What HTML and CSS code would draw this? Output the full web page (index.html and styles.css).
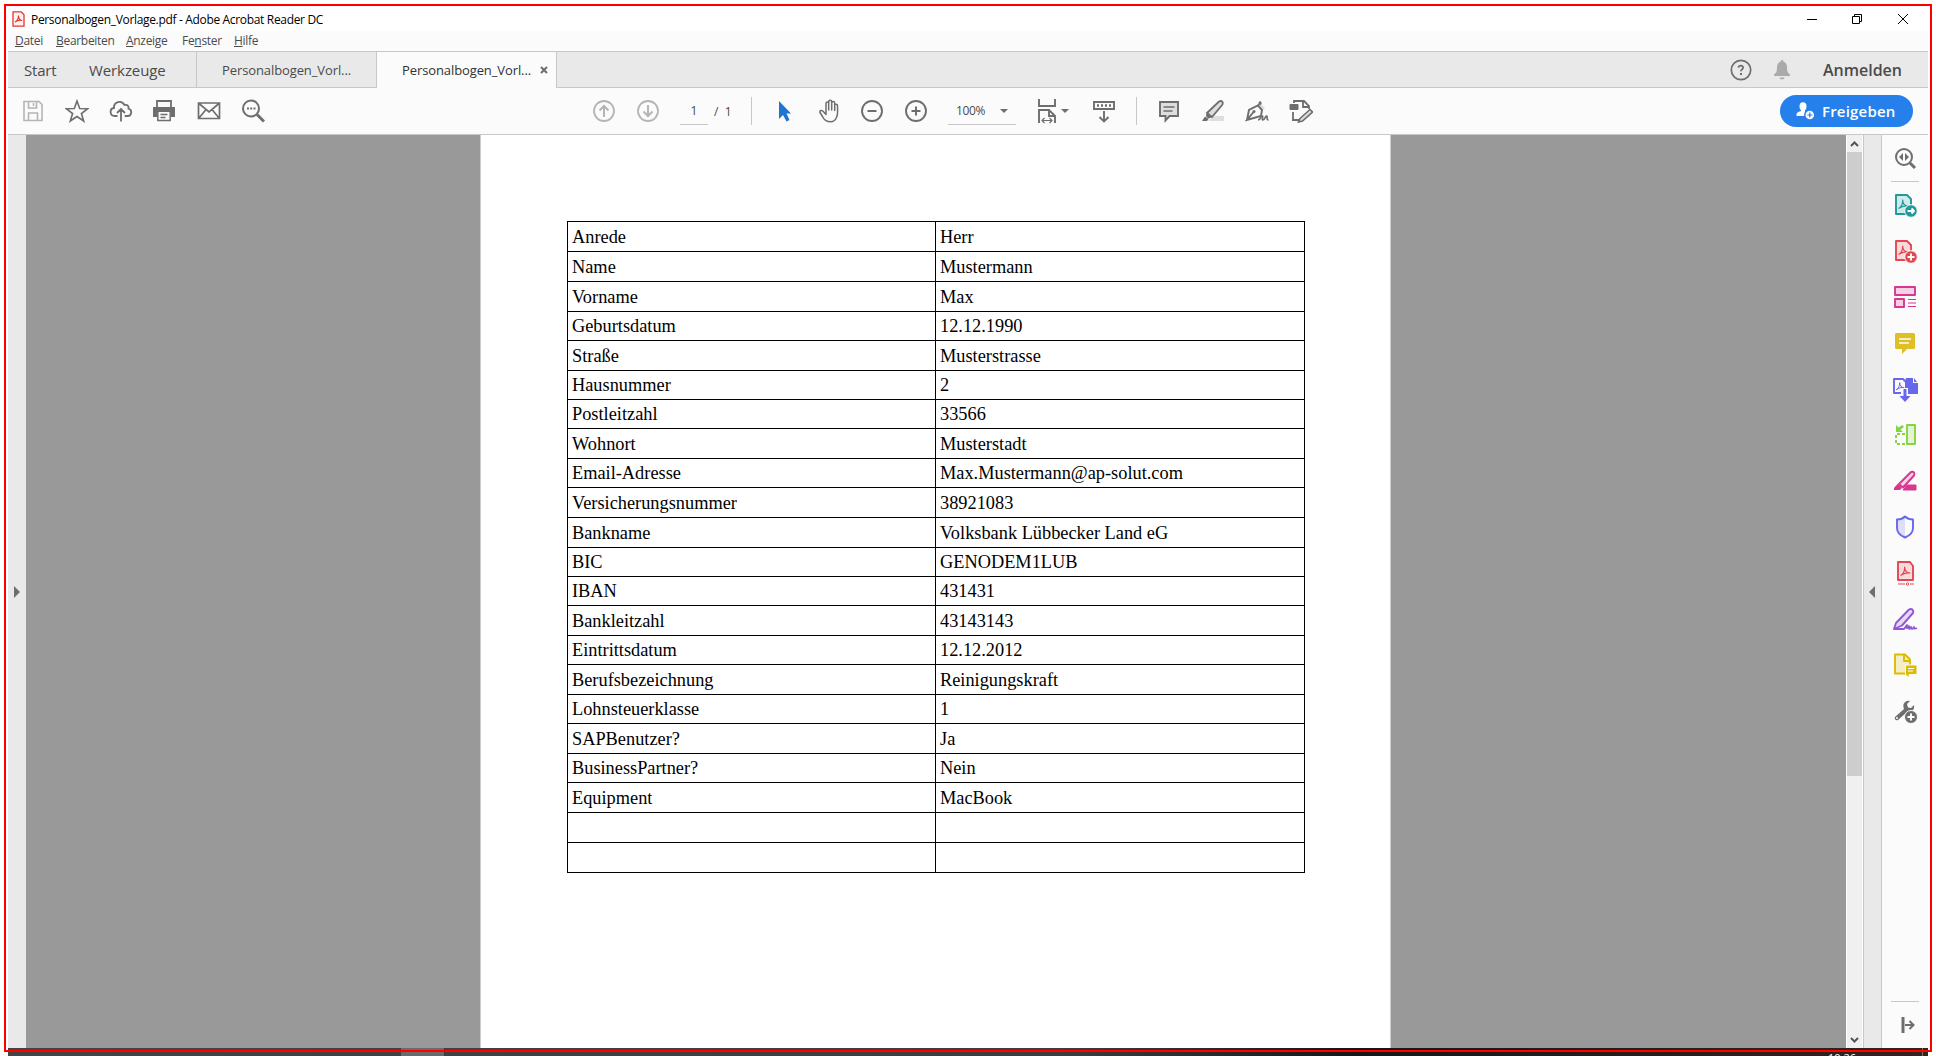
FILE: index.html
```
<!DOCTYPE html>
<html lang="de">
<head>
<meta charset="utf-8">
<title>Personalbogen_Vorlage.pdf - Adobe Acrobat Reader DC</title>
<link rel="stylesheet" href="styles.css">
</head>
<body>
<svg width="0" height="0" class="defs">
  <symbol id="pdf-mark" viewBox="0 0 12 12"><path d="M1.500 10.500c2-.8 4.200-4 4.200-8.500 0 3.500 2 5.800 5.300 6-3.300-.5-6.500.2-9.500 2.500" fill="none" stroke="currentColor" stroke-width="1.200" stroke-linejoin="round"/></symbol>
</svg>
<div class="window">
  <header class="titlebar">
    <svg class="app-icon" width="13" height="16" viewBox="0 0 13 16"><path d="M1 .8h8l3 3v11.400H1z" fill="#fff4f3" stroke="#e5352c" stroke-width="1.300" stroke-linejoin="round"/><path d="M3 11c2-.8 3.500-4 3.500-6.500C6.500 7.500 8 9.500 10.300 9.500 8 9 5 9.500 3 11z" fill="none" stroke="#e5352c" stroke-width="1.200"/></svg>
    <span class="title">Personalbogen_Vorlage.pdf - Adobe Acrobat Reader DC</span>
    <svg class="controls" width="102" height="12" viewBox="0 0 102 12" fill="none" stroke="#000"><path d="M0 6.500h10M45.500 3.500h7v7h-7zM47.500 3.500v-2h7v7h-2M91 1l10 10M101 1L91 11"/></svg>
  </header>
  <nav class="menubar"><span class="m1"><u>D</u>atei</span><span class="m2"><u>B</u>earbeiten</span><span class="m3"><u>A</u>nzeige</span><span class="m4">Fe<u>n</u>ster</span><span class="m5"><u>H</u>ilfe</span></nav>
  <div class="tabs">
    <div class="home"><span class="start">Start</span><span class="tools-tab">Werkzeuge</span></div>
    <div class="tab"><span>Personalbogen_Vorl...</span></div>
    <div class="tab active"><span>Personalbogen_Vorl...</span><svg width="8" height="8" viewBox="0 0 8 8"><path d="M1 1l6 6M7 1L1 7" stroke="#6e6e6e" stroke-width="2"/></svg></div>
    <div class="account">
      <svg width="22" height="22" viewBox="0 0 22 22"><circle cx="11" cy="11" r="9.700" fill="none" stroke="#6e6e6e" stroke-width="1.700"/><path d="M8.500 8.600C8.700 6 13.300 6.100 13.100 8.700c-.1 1.600-2.200 1.700-2.200 3.500" fill="none" stroke="#6e6e6e" stroke-width="1.800"/><path d="M10 14h2v2h-2z" fill="#6e6e6e"/></svg>
      <svg class="bell" width="18" height="20" viewBox="0 0 18 20" fill="#aaa"><path d="M9 0c1 0 1.500.8 1.500 1.800C13 2.500 14 4.500 14 7c0 4 .5 6 3 7.500V16H1v-1.500C3.500 13 4 11 4 7c0-2.500 1-4.500 3.500-5.200C7.500.8 8 0 9 0zM6.500 17.500h5C11 20 7 20 6.500 17.500z"/></svg>
      <b>Anmelden</b>
    </div>
  </div>
  <div class="toolbar">
    <div class="group files">
      <svg viewBox="0 0 24 24" class="pale"><path d="M3 2.500h15l3 3v16H3zM7.500 3v6h8V3M7.500 21v-7h9v7" stroke-width="1.600"/><path d="M12.500 4v3"/></svg>
      <svg viewBox="0 0 24 24"><path d="M12 2l2.700 7.500 8 .2-6.300 4.800 2.300 7.500L12 17.500 5.300 22l2.300-7.500-6.300-4.800 8-.2z" stroke-width="1.600"/></svg>
      <svg viewBox="0 0 24 24"><path d="M8.500 17H6C.3 17 .3 9.500 5 9 4.500 3 12.500.5 15.500 6c3-.8 4.500 1.500 4 3.600 4 1 3.500 7.400-.8 7.400h-3M12 22.500V10.500M8 14l4-4 4 4" stroke-width="1.800"/></svg>
      <svg viewBox="1 0 24 24"><path d="M5 8V2h14v6" stroke-width="1.800"/><path d="M1 8h22v10h-4v-5H5v5H1z" class="solid"/><path d="M5.800 13v8.500h12.400V13M8.500 15.500h7M8.500 18.500h5"/></svg>
      <svg viewBox="0 0 24 24"><path d="M1.500 4h21v15.500h-21zM2 4.500l10 8.500L22 4.500M2 19l7-8.500M22 19l-7-8.500" stroke-width="1.700"/></svg>
      <svg viewBox="0 0 24 24"><circle cx="10" cy="9.500" r="8" stroke-width="2"/><path d="M16 15.500l7 7" stroke-width="3"/><path d="M6 8.500h2v2H6zM9.200 8.500h2v2h-2zM12.500 8.500h2v2h-2z" class="dot"/></svg>
    </div>
    <div class="group pages">
      <svg viewBox="0 0 24 24" class="pale"><circle cx="12" cy="12" r="10" stroke-width="1.800"/><path d="M12 18V7M7.500 11.500L12 7l4.500 4.500" stroke-width="2"/></svg>
      <svg viewBox="0 0 24 24" class="pale"><circle cx="12" cy="12" r="10" stroke-width="1.800"/><path d="M12 6v11M7.500 12.500L12 17l4.500-4.500" stroke-width="2"/></svg>
    </div>
    <span class="page-field">1</span><span class="page-total">/&nbsp; 1</span>
    <i class="divider d1"></i>
    <div class="group view">
      <svg viewBox="0 0 24 24"><path d="M6 2v18l4-4 3.500 6.500 3-1.500-3-6.500H18z" fill="#1f74d1" stroke="none"/></svg>
      <svg viewBox="0 0 24 24"><path d="M7 13V4.500c0-2 2.700-2 2.700 0V11 2.700c0-2 3-2 3 0V11 4c0-2 3-2 3 0v7.500V6.500c0-1.800 2.800-1.800 2.800.2 0 7 .8 8.300-1 11.800-1.500 3.500-3.500 4.300-6 4.300-4 0-6-1.500-7.700-4.800L1 13.500c-.8-2 1.500-2.800 3-1.300l3 3.300z" stroke-width="1.500" stroke-linejoin="round" transform="translate(2 0)"/></svg>
      <svg viewBox="0 0 24 24"><circle cx="12" cy="12" r="10" stroke-width="1.900"/><path d="M7.500 12h9" stroke-width="2"/></svg>
      <svg viewBox="0 0 24 24"><circle cx="12" cy="12" r="10" stroke-width="1.900"/><path d="M7.500 12h9M12 7.500v9" stroke-width="2"/></svg>
    </div>
    <div class="zoom"><span>100%</span><i class="caret"></i></div>
    <svg class="fit" viewBox="0 0 18 26"><path d="M1 1v7h16V1M1 25V12h10l6 6v7M11 12v6h6" stroke-width="1.900"/><path d="M4 22.500h10M6.500 20L4 22.500 6.500 25M11.500 20l2.500 2.500-2.500 2.500" stroke-width="1.200"/></svg>
    <i class="caret fit-caret"></i>
    <svg class="scroll" viewBox="0 0 24 24"><path d="M2 3h20v7H2zM12 12v10M7.500 18l4.500 4.500 4.500-4.500" stroke-width="1.900"/><path d="M5 6.500h14" stroke-width="2.500" stroke-dasharray="2 2"/></svg>
    <i class="divider d2"></i>
    <div class="group annotate">
      <svg viewBox="0 0 24 24"><path d="M3 3h18v14h-8.500L8.500 21.500V17H3z" fill="#dedede" stroke-width="1.900"/><path d="M6.500 8h11M6.500 12h9" stroke-width="1.300"/></svg>
      <svg viewBox="0 0 24 24"><path d="M7 22l6-5h10v5z" fill="#dedede" stroke="none"/><path d="M6 14L18 2.500c3-1.500 4.500 1 3.500 3L11 18z" fill="#dedede" stroke-width="1.800"/><path d="M5.500 14l5.500 4.500-4 1L5 17zM4 17.500l3.500 2.500L6 22H1z" class="solid"/></svg>
      <svg viewBox="0 0 24 24"><path d="M12 3l3 1 5 5-3 3z" fill="#dedede" stroke="none"/><path d="M14.500 2.500l1.500 3M2 21L4 11l9-4.500 4 4.500-1 6L2 21l6.500-8" stroke-width="1.900"/><circle cx="9" cy="12.500" r="1.500" class="solid"/><path d="M13 21c3 0 2-4 4-4s-1 4 1 4 2-4 3.500-4-.5 4 2 4M12.500 7L16 3" stroke-width="1.700"/></svg>
      <svg viewBox="0 0 24 24"><path d="M5 4V2h10l5 5v3M14 2v6h6M4 13v8h6" stroke-width="1.800"/><rect x=".5" y="5" width="9" height="6" rx="1" class="solid"/><path d="M11 19.500L21 10.500l2.500 2.500-10 9-4 1z" fill="#dedede" stroke-width="1.600"/></svg>
    </div>
    <button class="share"><svg viewBox="0 0 19 18"><g fill="#fff"><ellipse cx="7" cy="4.500" rx="3.500" ry="4.200"/><path d="M5 7h4v3c1.500.5 2.500 1 2.500 1L9 14H.5C.3 11 1.500 10 5 9z"/><circle cx="13.800" cy="13" r="5" stroke="#2680eb"/></g><path d="M13.800 10.500v5M11.300 13h5" stroke="#2680eb" stroke-width="1.200"/></svg>Freigeben</button>
  </div>
  <main>
    <div class="left-rail"><i></i></div>
    <div class="canvas">
      <section class="sheet"><table>
        <colgroup><col class="label-col"><col></colgroup>
        <tr class="tall"><td>Anrede<td>Herr
        <tr class="tall"><td>Name<td>Mustermann
        <tr class="tall"><td>Vorname<td>Max
        <tr><td>Geburtsdatum<td>12.12.1990
        <tr class="tall"><td>Straße<td>Musterstrasse
        <tr><td>Hausnummer<td>2
        <tr><td>Postleitzahl<td>33566
        <tr class="tall"><td>Wohnort<td>Musterstadt
        <tr><td>Email-Adresse<td>Max.Mustermann@ap-solut.com
        <tr class="tall"><td>Versicherungsnummer<td>38921083
        <tr class="tall"><td>Bankname<td>Volksbank Lübbecker Land eG
        <tr><td>BIC<td>GENODEM1LUB
        <tr><td>IBAN<td>431431
        <tr class="tall"><td>Bankleitzahl<td>43143143
        <tr><td>Eintrittsdatum<td>12.12.2012
        <tr class="tall"><td>Berufsbezeichnung<td>Reinigungskraft
        <tr><td>Lohnsteuerklasse<td>1
        <tr class="tall"><td>SAPBenutzer?<td>Ja
        <tr><td>BusinessPartner?<td>Nein
        <tr class="tall"><td>Equipment<td>MacBook
        <tr class="tall"><td><td>
        <tr class="tall"><td><td>
      </table></section>
    </div>
    <div class="scrollbar"><svg viewBox="0 0 15 17"><path d="M4 11l3.500-3.500L11 11" /></svg><i></i><svg viewBox="0 0 15 17"><path d="M4 7l3.500 3.500L11 7"/></svg></div>
    <div class="right-rail"><i></i></div>
    <aside>
      <svg class="find" viewBox="0 0 24 24" stroke="#6e6e6e"><circle cx="11" cy="11" r="8" stroke-width="2"/><path d="M17 17l5 5" stroke-width="3"/><path d="M10 7v8l-4-4zM12 7v8l4-4z" fill="#6e6e6e" stroke="none"/></svg>
      <i class="rule"></i>
      <div class="tool-list">
      <svg viewBox="0 0 24 24" color="#23979c"><path d="M3 2h11l4 4v15H3z" fill="#d0e9ea"/><use href="#pdf-mark" x="4" y="5" width="12" height="12"/><circle cx="18" cy="18" r="6.300" fill="currentColor" stroke="#fbfbfb" stroke-width="1"/><path d="M14.500 18h6M18.500 15.500L21 18l-2.500 2.500" stroke="#fff"/></svg>
      <svg viewBox="0 0 24 24" color="#e34850"><path d="M3 2h11l4 4v15H3z" fill="#f9dadc"/><use href="#pdf-mark" x="4" y="5" width="12" height="12"/><circle cx="18" cy="18" r="6.300" fill="currentColor" stroke="#fbfbfb" stroke-width="1"/><path d="M14.500 18h7M18 14.500v7" stroke="#fff"/></svg>
      <svg viewBox="0 0 24 24" color="#d83790"><path d="M2 2h20v8H2zM2 14h9v8H2z" fill="#f4d1e4"/><path d="M15 14.500h8M15 18h8M15 21.500h8" stroke-width="1.200"/></svg>
      <svg viewBox="0 0 24 24" color="#dfbf23"><path d="M3.500 2h17Q22 2 22 3.500v13q0 1.500-1.500 1.500H14l-5 5v-5H3.500Q2 18 2 16.500v-13Q2 2 3.500 2z" fill="currentColor" stroke="none"/><path d="M6 8h12M6 12h10" stroke="#fff" stroke-width="1.600"/></svg>
      <svg viewBox="0 0 24 24" color="#6767ec"><path d="M8 16H1V2h9l3 3M10 16h2"/><path d="M13 1h7v5h5v11H15v-6h-3V4z" fill="currentColor" stroke="none"/><path d="M21 1l3 4h-3z" fill="currentColor" stroke="none"/><use href="#pdf-mark" x="2" y="4" width="10" height="10"/><path d="M12 11v9" stroke="#fbfbfb" stroke-width="5"/><path d="M12 12v8" stroke-width="3"/><path d="M6.500 19h11L12 25z" fill="currentColor" stroke="none"/></svg>
      <svg viewBox="0 0 24 24" color="#86d43f"><path d="M14 2h8v19h-8z" fill="#e3f4d4"/><path d="M12 11H3v10h9" stroke-dasharray="3 2"/><path d="M3 2v7h7L7.500 6.500 11 4 9.500 2 5.500 4.500z" fill="currentColor" stroke="none"/></svg>
      <svg viewBox="0 0 24 24" color="#d83790"><path d="M10 21l4-5h9v5z" fill="currentColor" stroke-width="1"/><path d="M6 15L18 3c3-1 4 1 3 3.500L10 18.500z" fill="#f4d1e4"/><path d="M5 14.500L9 19l-2 2H1v-2z" fill="currentColor" stroke="none"/></svg>
      <svg viewBox="0 0 24 24" color="#6767ec"><path d="M12 1.500C10 3.500 7 4.500 4 4.500V13c0 4.500 3 7.500 8 9.500z" fill="#dedef9" stroke="none"/><path d="M12 1.500C10 3.500 7 4.500 4 4.500V13c0 4.500 3 7.500 8 9.500 5-2 8-5 8-9.500V4.500c-3 0-6-1-8-3z"/></svg>
      <svg viewBox="0 0 24 24" color="#e34850"><path d="M5 1h12l3 4v14H5z" fill="#f9dadc"/><use href="#pdf-mark" x="6" y="4" width="12" height="12"/><path d="M5 23h7M17 23h4" stroke-width="1.200"/><circle cx="14.500" cy="23" r="1.200" stroke-width="1"/></svg>
      <svg viewBox="0 0 24 24" color="#9256d9"><path d="M1 22l2-6L16 2.500c3-1.500 5 1 4 3.500L9 18.500z" fill="#e5d9f5"/><path d="M1 22h10l3-4c-1 4 0 4 2 1-.5 3 0 4 2 1 0 3 2 2 3 0 0 2 1 2 3 1"/></svg>
      <svg viewBox="0 0 24 24" color="#dcbc00"><path d="M2 1.500h10l5 5v14H2z" fill="#f4edc6"/><path d="M11 2v6h6"/><path d="M12.500 12H24v9.500h-8V25l-3.500-3.500z" fill="currentColor" stroke="#fbfbfb" stroke-width="1"/><path d="M15 15.500h6M15 18h5" stroke="#fff" stroke-width="1.200"/></svg>
      <svg viewBox="0 0 24 24" color="#6e6e6e"><path d="M2 18L11 10C9 5 12 1 17 2l-3 3 1 3.500 3 .5 3-3c1 5-3 8-7 7L5 21c-2 1-4-1-3-3z" fill="currentColor" stroke="none"/><circle cx="4" cy="19" r="1" fill="#fff" stroke="none"/><circle cx="18" cy="18" r="6.500" fill="currentColor" stroke="#fbfbfb" stroke-width="1"/><path d="M14.500 18h7M18 14.500v7" stroke="#fff"/></svg>
      </div>
      <div class="collapse"><i class="rule"></i><svg viewBox="0 0 16 18" stroke="#6e6e6e"><path d="M3 1v16" stroke-width="3"/><path d="M5 9h8M9.500 5l4 4-4 4" stroke-width="2"/></svg></div>
    </aside>
  </main>
  <footer><i class="task"></i><span>10:26</span><i class="peek"></i></footer>
</div>
<div class="outline"></div>
</body>
</html>
```
FILE: styles.css
```
* { box-sizing: border-box; }
body { margin: 0; width: 1936px; height: 1056px; overflow: hidden; background: #fff; font-family: "Open Sans", "Noto Sans", sans-serif; color: #4b4b4b; }
svg { display: block; flex: none; }
.defs { position: absolute; }
.outline { position: absolute; left: 4px; top: 4px; width: 1928px; height: 1048px; border: 2px solid #f00; }
.window { display: flex; flex-direction: column; width: 1920px; height: 1056px; margin-left: 8px; }

.titlebar { display: flex; align-items: center; height: 31px; padding: 7px 19px 0 4px; flex: none; }
.app-icon { margin-right: 6px; }
.title { font-size: 12px; letter-spacing: -.33px; color: #000; white-space: nowrap; }
.controls { margin-left: auto; }

.menubar { display: flex; align-items: center; height: 20px; flex: none; padding: 0 0 2px 7px; background: #fbfbfb; font-size: 12px; letter-spacing: -.3px; }
.menubar span { white-space: nowrap; }
.m1 { width: 41px; }
.m2 { width: 70px; }
.m3 { width: 56px; }
.m4 { width: 52px; }

.tabs { display: flex; height: 37px; flex: none; border-top: 1px solid #c8c8c8; background: linear-gradient(#e9e9e9 35px, #c8c8c8 35px); }
.home { display: flex; align-items: center; width: 188px; padding: 0 0 1px 16px; font-size: 15px; }
.start { width: 65px; letter-spacing: -.2px; }
.tools-tab { letter-spacing: -.1px; }
.tab { display: flex; align-items: center; width: 180px; padding: 0 0 1px 25px; border-left: 1px solid #c8c8c8; font-size: 13px; letter-spacing: -.1px; white-space: nowrap; }
.tab.active { width: 181px; border-right: 1px solid #c8c8c8; background: #fbfbfb; color: #323232; }
.tab svg { margin-left: 9px; }
.account { display: flex; align-items: center; margin-left: auto; padding: 0 26px 1px 0; font-size: 16px; }
.account .bell { margin: 0 32px 0 21px; }
.account b { font-weight: 600; }

.toolbar { display: flex; align-items: center; height: 47px; flex: none; border-bottom: 1px solid #c8c8c8; background: #fbfbfb; }
.toolbar svg { width: 24px; height: 24px; fill: none; stroke: #6e6e6e; stroke-width: 1.500; }
.toolbar .solid { fill: #6e6e6e; stroke: none; }
.toolbar .dot { fill: #6e6e6e; stroke: none; }
.toolbar svg.pale { stroke: #b5b5b5; }
.group { display: flex; gap: 20px; flex: none; }
.files { margin-left: 13px; }
.pages { margin-left: 327px; }
.page-field { width: 28px; height: 27px; margin-left: 20px; padding-top: 4px; border-bottom: 1px solid #c8c8c8; text-align: center; font-size: 12px; }
.page-total { width: 24px; margin-left: 6px; font-size: 12px; white-space: nowrap; }
.divider { width: 1px; height: 28px; background: #c8c8c8; flex: none; }
.d1 { margin-left: 13px; }
.view { margin-left: 21px; }
.view svg:nth-child(n+3) { margin-left: -1px; margin-right: 1px; }
.zoom { display: flex; align-items: center; width: 68px; height: 27px; margin-left: 19px; padding: 0 8px; border-bottom: 1px solid #c8c8c8; font-size: 12px; letter-spacing: -.4px; justify-content: space-between; }
.caret { border: 4px solid transparent; border-top-color: #6e6e6e; border-bottom: 0; flex: none; }
.toolbar .fit { width: 18px; height: 26px; margin-left: 22px; }
.fit-caret { margin-left: 5px; }
.toolbar .scroll { margin-left: 23px; }
.d2 { margin-left: 20px; }
.annotate { margin-left: 20px; }
.share { display: flex; align-items: center; width: 133px; height: 32px; margin-left: auto; margin-right: 15px; padding: 0 0 1px 16px; border: 0; border-radius: 16px; background: #2680eb; color: #fff; font: 600 15px "Open Sans", sans-serif; letter-spacing: .2px; }
.toolbar .share svg { width: 19px; height: 18px; margin-right: 7px; stroke: none; }

main { display: flex; height: 913px; flex: none; }
.left-rail { display: flex; align-items: center; width: 18px; padding-left: 6px; background: #e9e9e9; }
.left-rail i { border: 6px solid transparent; border-left-color: #6e6e6e; border-right: 0; }
.canvas { flex: 1; background: #999; }
.sheet { width: 911px; height: 913px; margin-left: 454px; padding: 86px 0 0 86px; background: #fff; border: solid #ccc; border-width: 0 1px; }
table { width: 738px; border-collapse: collapse; table-layout: fixed; font: 18.330px/20px "Liberation Serif", serif; color: #000; }
.label-col { width: 368px; }
tr { height: 29px; }
tr.tall { height: 30px; }
td { height: inherit; padding: 0 4px; border: 1px solid #000; white-space: nowrap; }
.scrollbar { display: flex; flex-direction: column; width: 17px; background: #f0f0f0; border: solid #fff; border-width: 0 1px; }
.scrollbar svg { width: 15px; height: 17px; fill: none; stroke: #555; stroke-width: 2; }
.scrollbar i { height: 624px; background: #cdcdcd; margin-bottom: auto; }
.right-rail { display: flex; align-items: center; width: 19px; padding-left: 5px; background: #e9e9e9; border: solid #c8c8c8; border-width: 0 1px; }
.right-rail i { border: 6px solid transparent; border-right-color: #6e6e6e; border-left: 0; }
aside { display: flex; flex-direction: column; align-items: center; width: 46px; background: #fbfbfb; padding-top: 11px; }
aside svg { width: 24px; height: 24px; fill: none; overflow: visible; }
aside .rule { display: block; width: 28px; height: 1px; background: #c8c8c8; }
.find { margin-bottom: 11px; }
.tool-list { display: flex; flex-direction: column; gap: 22px; margin-top: 11px; }
.tool-list svg { stroke: currentColor; stroke-width: 1.900; stroke-linejoin: round; }
.collapse { display: flex; flex-direction: column; align-items: center; margin-top: auto; padding-bottom: 14px; }
.collapse svg { width: 16px; height: 18px; margin: 14px 0 0 5px; }

footer { display: flex; height: 8px; flex: none; overflow: hidden; background: linear-gradient(90deg, #444 0, #3d3d3d 55%, #171717 70%, #281d1b 85%, #34231f); }
.task { width: 44px; margin-left: 393px; background: #6b6b6b; border-right: 1px solid #383838; }
footer span { margin-left: 1383px; padding-top: 4px; color: #fff; font-size: 11px; line-height: 11px; }
.peek { width: 1px; margin-left: auto; margin-right: 5px; background: #776; }
```
